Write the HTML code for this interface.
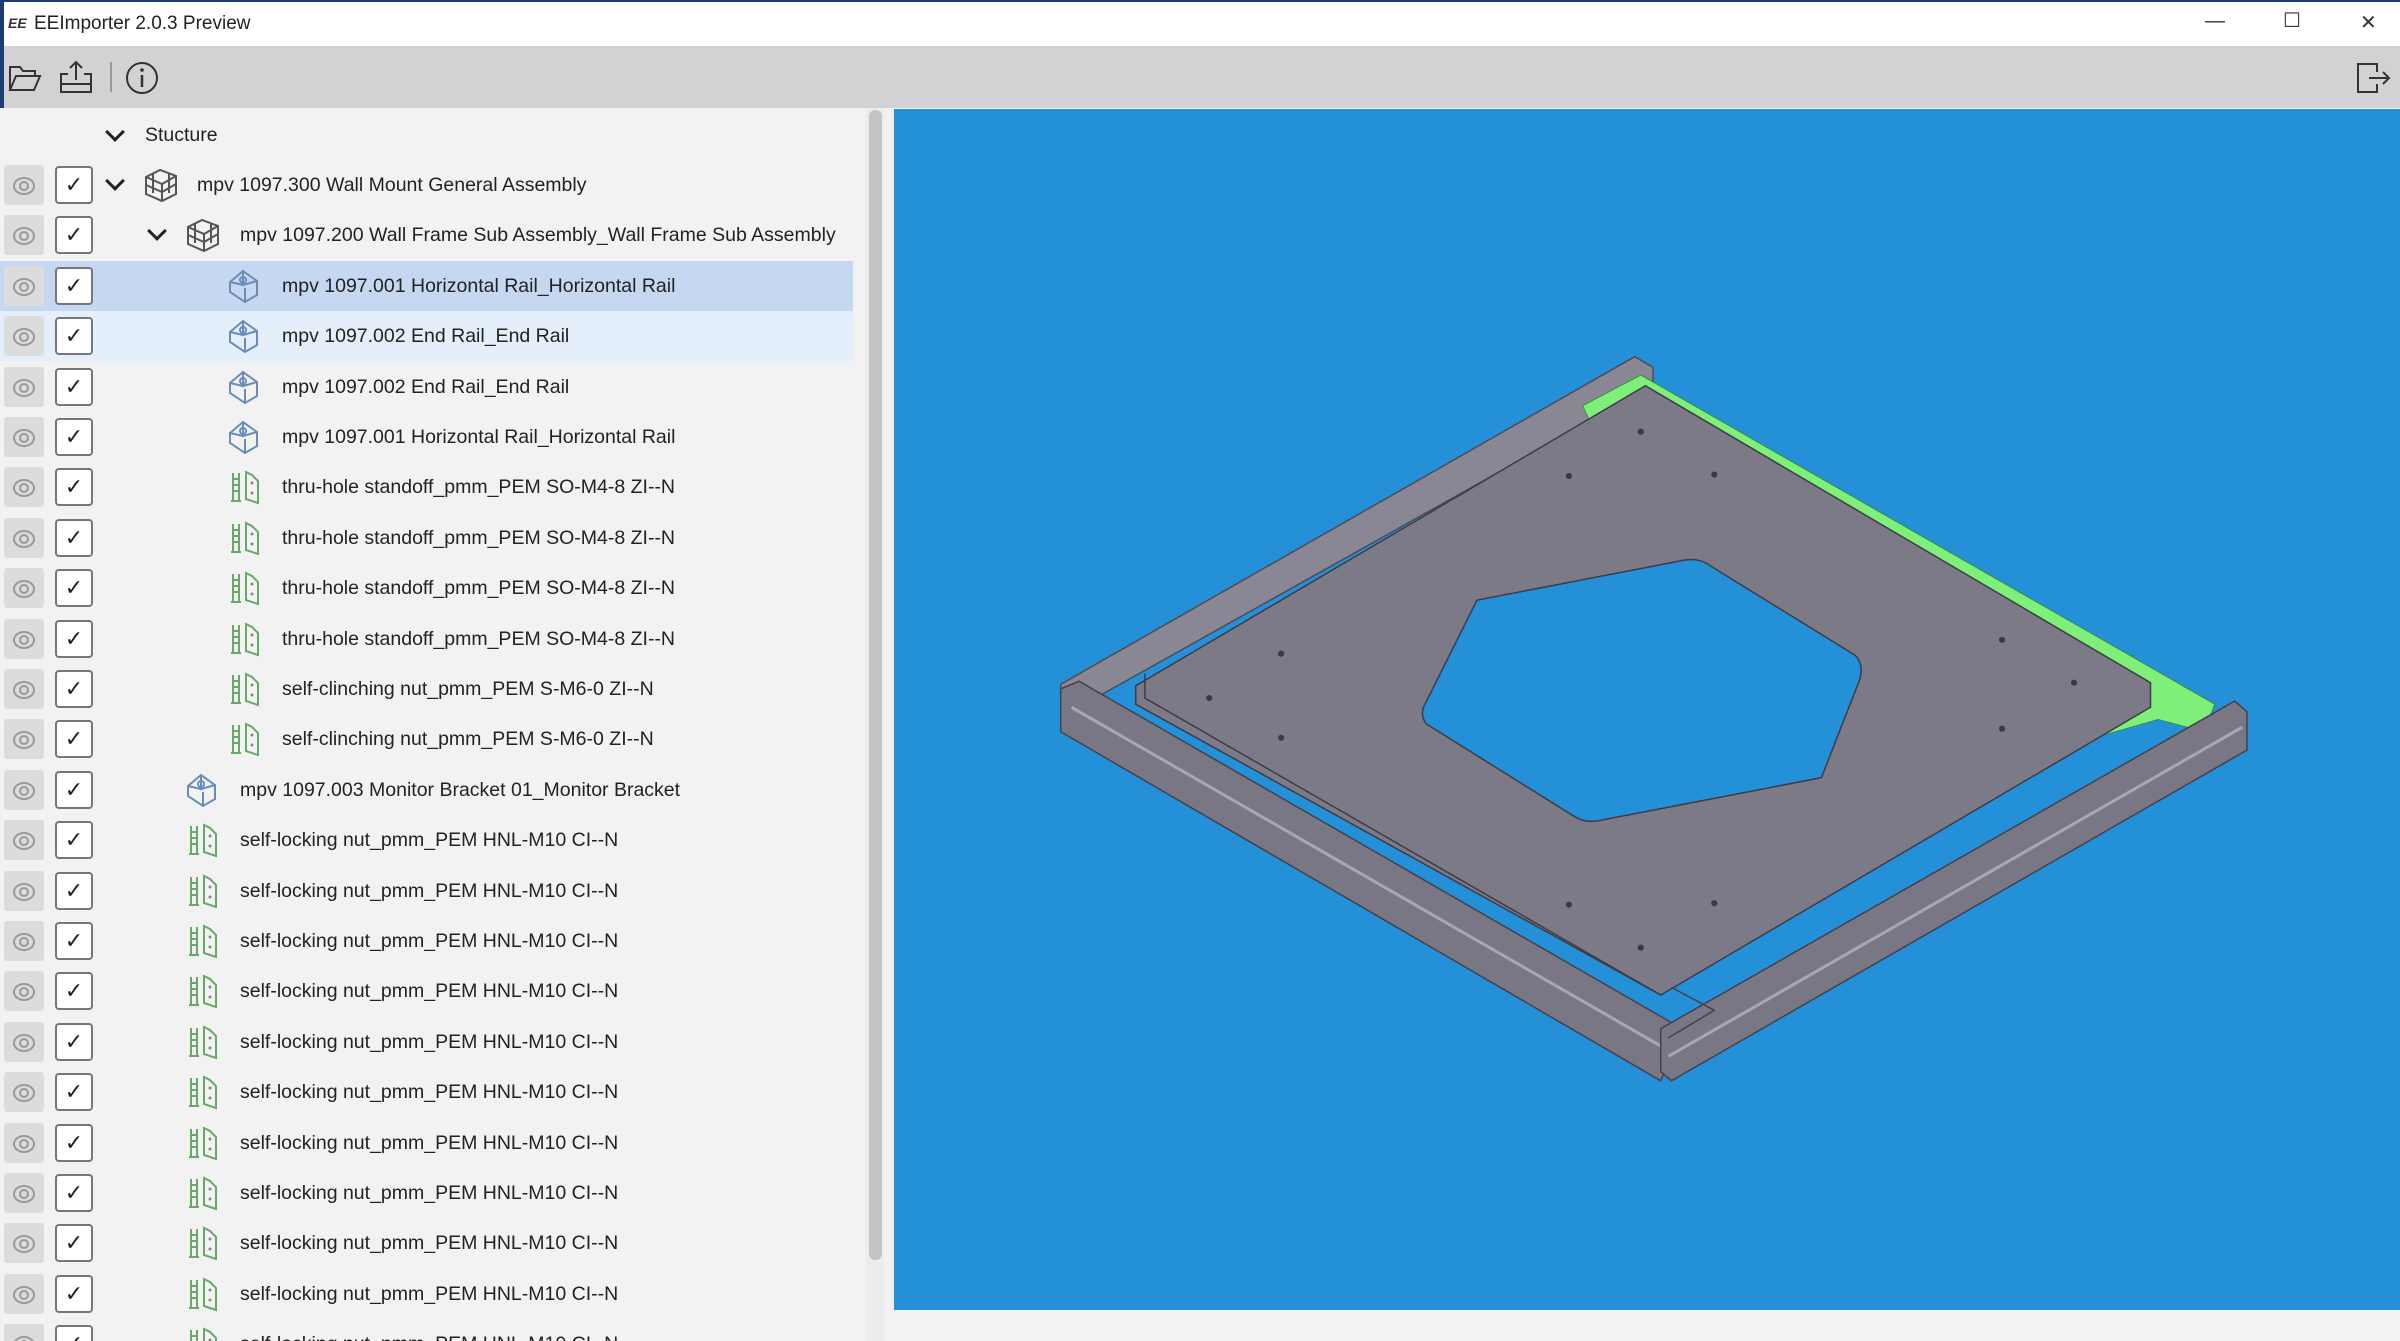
<!DOCTYPE html>
<html><head><meta charset="utf-8"><style>
*{margin:0;padding:0;box-sizing:border-box}
body{width:2400px;height:1341px;overflow:hidden;background:#f2f2f2;font-family:"Liberation Sans",sans-serif;position:relative;color:#222}
.title{position:absolute;left:0;top:0;width:2400px;height:46px;background:#fff;border-top:2px solid #1c3e6e}
.title .t{position:absolute;left:34px;top:11px;font-size:19px;color:#222}
.title .logo{position:absolute;left:8px;top:13px;font-size:14px;font-weight:bold;font-style:italic;color:#333}
.wc{position:absolute;top:8px;font-size:20px;color:#333}
.tb{position:absolute;left:0;top:46px;width:2400px;height:62px;background:#d2d2d4}
.left{position:absolute;left:0;top:108px;width:866px;height:1233px;background:#f2f2f2;overflow:hidden}
.edge{position:absolute;left:0;top:0;width:4px;height:1341px;background:#1c3e6e}
.sb{position:absolute;left:866px;top:108px;width:18px;height:1233px;background:#ececec}
.sb div{position:absolute;left:3px;top:2px;width:13px;height:1150px;background:#c4c4c4;border-radius:6px}
.vp{position:absolute;left:894px;top:109px;width:1506px;height:1201px;background:#2490d8}
.row{position:absolute;left:0;height:50px;width:866px}
.eye{position:absolute;left:4px;top:5px;width:40px;height:40px;background:#dcdcdc;border-radius:3px}
.eye:before{content:"";position:absolute;left:9px;top:12px;width:18px;height:14px;border:2px solid #999;border-radius:50%}
.eye:after{content:"";position:absolute;left:15px;top:16px;width:6px;height:6px;border:2px solid #999;border-radius:50%}
.cb{position:absolute;left:55px;top:6px;width:38px;height:38px;background:#fff;border:2px solid #777;border-radius:4px;text-align:center;font-size:22px;line-height:34px;color:#222}
.chev{position:absolute;top:14px;width:14px;height:14px;border-right:3px solid #222;border-bottom:3px solid #222;transform:rotate(45deg)}
.ic{position:absolute;top:7px;width:38px;height:36px}
.tx{position:absolute;top:14px;font-size:19.5px;white-space:nowrap}
.sel{background:#c6d8f1}
.hov{background:#e5eefb}
</style></head><body>
<div class="title"><span class="logo">EE</span><span class="t">EEImporter 2.0.3 Preview</span>
<span class="wc" style="left:2205px">—</span><span class="wc" style="left:2283px;top:6px">☐</span><span class="wc" style="left:2360px">✕</span></div>
<div class="tb">
<svg style="position:absolute;left:8px;top:18px" width="34" height="28" viewBox="0 0 34 28"><path d="M2 26V3h10l3 4h12v5M2 26l6-14h24l-6 14z" fill="none" stroke="#333" stroke-width="2"/></svg>
<svg style="position:absolute;left:58px;top:14px" width="36" height="34" viewBox="0 0 36 34"><path d="M18 2v18M12 8l6-6 6 6M10 14H3v18h30V14h-7M3 24h30" fill="none" stroke="#333" stroke-width="2"/></svg>
<div style="position:absolute;left:110px;top:16px;width:2px;height:30px;background:#999"></div>
<svg style="position:absolute;left:124px;top:14px" width="36" height="36" viewBox="0 0 36 36"><circle cx="18" cy="18" r="15" fill="none" stroke="#333" stroke-width="2"/><path d="M18 15v12" stroke="#333" stroke-width="2.5"/><circle cx="18" cy="10" r="1.8" fill="#333"/></svg>
<svg style="position:absolute;left:2355px;top:16px" width="36" height="32" viewBox="0 0 36 32"><path d="M22 10V2H3v28h19v-8M14 16h20M28 10l6 6-6 6" fill="none" stroke="#333" stroke-width="2"/></svg>
</div>
<div class="edge"></div>
<div class="left">
<div class="chev" style="left:108px;top:17px"></div><div class="tx" style="left:145px;top:16px">Stucture</div>

<div class="row" style="top:52px"><div class="eye"></div><div class="cb">✓</div><div class="chev" style="left:108px"></div><svg class="ic" style="left:142px" viewBox="0 0 38 36"><path d="M4 10l14-7 16 6v18l-14 7-16-7z M4 10l16 7 14-8M20 17v17M11 6v20M27 6v20M4 18l16 7 14-8" fill="none" stroke="#555" stroke-width="2"/></svg><div class="tx" style="left:197px">mpv 1097.300 Wall Mount General Assembly</div></div>
<div class="row" style="top:102.4px"><div class="eye"></div><div class="cb">✓</div><div class="chev" style="left:150px"></div><svg class="ic" style="left:184px" viewBox="0 0 38 36"><path d="M4 10l14-7 16 6v18l-14 7-16-7z M4 10l16 7 14-8M20 17v17M11 6v20M27 6v20M4 18l16 7 14-8" fill="none" stroke="#555" stroke-width="2"/></svg><div class="tx" style="left:240px">mpv 1097.200 Wall Frame Sub Assembly_Wall Frame Sub Assembly</div></div>

<div class="row sel" style="top:152.8px;width:853px"><div class="eye"></div><div class="cb">✓</div><svg class="ic" style="left:226px" viewBox="0 0 38 36"><path d="M4 14L17 3l14 10v14L19 34 4 24z M17 3v14l14-4M4 14l13 3M19 34V20" fill="none" stroke="#6a8cb8" stroke-width="2"/><circle cx="17" cy="12" r="3" fill="none" stroke="#6a8cb8" stroke-width="2"/></svg><div class="tx" style="left:282px">mpv 1097.001 Horizontal Rail_Horizontal Rail</div></div>
<div class="row hov" style="top:203.2px;width:853px"><div class="eye"></div><div class="cb">✓</div><svg class="ic" style="left:226px" viewBox="0 0 38 36"><path d="M4 14L17 3l14 10v14L19 34 4 24z M17 3v14l14-4M4 14l13 3M19 34V20" fill="none" stroke="#6a8cb8" stroke-width="2"/><circle cx="17" cy="12" r="3" fill="none" stroke="#6a8cb8" stroke-width="2"/></svg><div class="tx" style="left:282px">mpv 1097.002 End Rail_End Rail</div></div>
<div class="row" style="top:253.6px"><div class="eye"></div><div class="cb">✓</div><svg class="ic" style="left:226px" viewBox="0 0 38 36"><path d="M4 14L17 3l14 10v14L19 34 4 24z M17 3v14l14-4M4 14l13 3M19 34V20" fill="none" stroke="#6a8cb8" stroke-width="2"/><circle cx="17" cy="12" r="3" fill="none" stroke="#6a8cb8" stroke-width="2"/></svg><div class="tx" style="left:282px">mpv 1097.002 End Rail_End Rail</div></div>
<div class="row" style="top:304px"><div class="eye"></div><div class="cb">✓</div><svg class="ic" style="left:226px" viewBox="0 0 38 36"><path d="M4 14L17 3l14 10v14L19 34 4 24z M17 3v14l14-4M4 14l13 3M19 34V20" fill="none" stroke="#6a8cb8" stroke-width="2"/><circle cx="17" cy="12" r="3" fill="none" stroke="#6a8cb8" stroke-width="2"/></svg><div class="tx" style="left:282px">mpv 1097.001 Horizontal Rail_Horizontal Rail</div></div>

<div class="row" style="top:354.4px"><div class="eye"></div><div class="cb">✓</div><svg class="ic" style="left:226px" viewBox="0 0 38 36"><path d="M7 4v28M13 4v28M7 10h6M7 16h6M7 22h6M5 32h10M20 3l6 3 6 6v22l-12-4z" fill="none" stroke="#6aa86a" stroke-width="2"/><circle cx="26" cy="14" r="1.5" fill="#888"/><circle cx="26" cy="24" r="1.5" fill="#888"/></svg><div class="tx" style="left:282px">thru-hole standoff_pmm_PEM SO-M4-8 ZI--N</div></div>
<div class="row" style="top:404.8px"><div class="eye"></div><div class="cb">✓</div><svg class="ic" style="left:226px" viewBox="0 0 38 36"><path d="M7 4v28M13 4v28M7 10h6M7 16h6M7 22h6M5 32h10M20 3l6 3 6 6v22l-12-4z" fill="none" stroke="#6aa86a" stroke-width="2"/><circle cx="26" cy="14" r="1.5" fill="#888"/><circle cx="26" cy="24" r="1.5" fill="#888"/></svg><div class="tx" style="left:282px">thru-hole standoff_pmm_PEM SO-M4-8 ZI--N</div></div>
<div class="row" style="top:455.2px"><div class="eye"></div><div class="cb">✓</div><svg class="ic" style="left:226px" viewBox="0 0 38 36"><path d="M7 4v28M13 4v28M7 10h6M7 16h6M7 22h6M5 32h10M20 3l6 3 6 6v22l-12-4z" fill="none" stroke="#6aa86a" stroke-width="2"/><circle cx="26" cy="14" r="1.5" fill="#888"/><circle cx="26" cy="24" r="1.5" fill="#888"/></svg><div class="tx" style="left:282px">thru-hole standoff_pmm_PEM SO-M4-8 ZI--N</div></div>
<div class="row" style="top:505.6px"><div class="eye"></div><div class="cb">✓</div><svg class="ic" style="left:226px" viewBox="0 0 38 36"><path d="M7 4v28M13 4v28M7 10h6M7 16h6M7 22h6M5 32h10M20 3l6 3 6 6v22l-12-4z" fill="none" stroke="#6aa86a" stroke-width="2"/><circle cx="26" cy="14" r="1.5" fill="#888"/><circle cx="26" cy="24" r="1.5" fill="#888"/></svg><div class="tx" style="left:282px">thru-hole standoff_pmm_PEM SO-M4-8 ZI--N</div></div>
<div class="row" style="top:556px"><div class="eye"></div><div class="cb">✓</div><svg class="ic" style="left:226px" viewBox="0 0 38 36"><path d="M7 4v28M13 4v28M7 10h6M7 16h6M7 22h6M5 32h10M20 3l6 3 6 6v22l-12-4z" fill="none" stroke="#6aa86a" stroke-width="2"/><circle cx="26" cy="14" r="1.5" fill="#888"/><circle cx="26" cy="24" r="1.5" fill="#888"/></svg><div class="tx" style="left:282px">self-clinching nut_pmm_PEM S-M6-0 ZI--N</div></div>
<div class="row" style="top:606.4px"><div class="eye"></div><div class="cb">✓</div><svg class="ic" style="left:226px" viewBox="0 0 38 36"><path d="M7 4v28M13 4v28M7 10h6M7 16h6M7 22h6M5 32h10M20 3l6 3 6 6v22l-12-4z" fill="none" stroke="#6aa86a" stroke-width="2"/><circle cx="26" cy="14" r="1.5" fill="#888"/><circle cx="26" cy="24" r="1.5" fill="#888"/></svg><div class="tx" style="left:282px">self-clinching nut_pmm_PEM S-M6-0 ZI--N</div></div>

<div class="row" style="top:656.8px"><div class="eye"></div><div class="cb">✓</div><svg class="ic" style="left:184px" viewBox="0 0 38 36"><path d="M4 14L17 3l14 10v14L19 34 4 24z M17 3v14l14-4M4 14l13 3M19 34V20" fill="none" stroke="#6a8cb8" stroke-width="2"/><circle cx="17" cy="12" r="3" fill="none" stroke="#6a8cb8" stroke-width="2"/></svg><div class="tx" style="left:240px">mpv 1097.003 Monitor Bracket 01_Monitor Bracket</div></div>

<div class="row" style="top:707.2px"><div class="eye"></div><div class="cb">✓</div><svg class="ic" style="left:184px" viewBox="0 0 38 36"><path d="M7 4v28M13 4v28M7 10h6M7 16h6M7 22h6M5 32h10M20 3l6 3 6 6v22l-12-4z" fill="none" stroke="#6aa86a" stroke-width="2"/><circle cx="26" cy="14" r="1.5" fill="#888"/><circle cx="26" cy="24" r="1.5" fill="#888"/></svg><div class="tx" style="left:240px">self-locking nut_pmm_PEM HNL-M10 CI--N</div></div>
<div class="row" style="top:757.6px"><div class="eye"></div><div class="cb">✓</div><svg class="ic" style="left:184px" viewBox="0 0 38 36"><path d="M7 4v28M13 4v28M7 10h6M7 16h6M7 22h6M5 32h10M20 3l6 3 6 6v22l-12-4z" fill="none" stroke="#6aa86a" stroke-width="2"/><circle cx="26" cy="14" r="1.5" fill="#888"/><circle cx="26" cy="24" r="1.5" fill="#888"/></svg><div class="tx" style="left:240px">self-locking nut_pmm_PEM HNL-M10 CI--N</div></div>
<div class="row" style="top:808px"><div class="eye"></div><div class="cb">✓</div><svg class="ic" style="left:184px" viewBox="0 0 38 36"><path d="M7 4v28M13 4v28M7 10h6M7 16h6M7 22h6M5 32h10M20 3l6 3 6 6v22l-12-4z" fill="none" stroke="#6aa86a" stroke-width="2"/><circle cx="26" cy="14" r="1.5" fill="#888"/><circle cx="26" cy="24" r="1.5" fill="#888"/></svg><div class="tx" style="left:240px">self-locking nut_pmm_PEM HNL-M10 CI--N</div></div>
<div class="row" style="top:858.4px"><div class="eye"></div><div class="cb">✓</div><svg class="ic" style="left:184px" viewBox="0 0 38 36"><path d="M7 4v28M13 4v28M7 10h6M7 16h6M7 22h6M5 32h10M20 3l6 3 6 6v22l-12-4z" fill="none" stroke="#6aa86a" stroke-width="2"/><circle cx="26" cy="14" r="1.5" fill="#888"/><circle cx="26" cy="24" r="1.5" fill="#888"/></svg><div class="tx" style="left:240px">self-locking nut_pmm_PEM HNL-M10 CI--N</div></div>
<div class="row" style="top:908.8px"><div class="eye"></div><div class="cb">✓</div><svg class="ic" style="left:184px" viewBox="0 0 38 36"><path d="M7 4v28M13 4v28M7 10h6M7 16h6M7 22h6M5 32h10M20 3l6 3 6 6v22l-12-4z" fill="none" stroke="#6aa86a" stroke-width="2"/><circle cx="26" cy="14" r="1.5" fill="#888"/><circle cx="26" cy="24" r="1.5" fill="#888"/></svg><div class="tx" style="left:240px">self-locking nut_pmm_PEM HNL-M10 CI--N</div></div>
<div class="row" style="top:959.2px"><div class="eye"></div><div class="cb">✓</div><svg class="ic" style="left:184px" viewBox="0 0 38 36"><path d="M7 4v28M13 4v28M7 10h6M7 16h6M7 22h6M5 32h10M20 3l6 3 6 6v22l-12-4z" fill="none" stroke="#6aa86a" stroke-width="2"/><circle cx="26" cy="14" r="1.5" fill="#888"/><circle cx="26" cy="24" r="1.5" fill="#888"/></svg><div class="tx" style="left:240px">self-locking nut_pmm_PEM HNL-M10 CI--N</div></div>
<div class="row" style="top:1009.6px"><div class="eye"></div><div class="cb">✓</div><svg class="ic" style="left:184px" viewBox="0 0 38 36"><path d="M7 4v28M13 4v28M7 10h6M7 16h6M7 22h6M5 32h10M20 3l6 3 6 6v22l-12-4z" fill="none" stroke="#6aa86a" stroke-width="2"/><circle cx="26" cy="14" r="1.5" fill="#888"/><circle cx="26" cy="24" r="1.5" fill="#888"/></svg><div class="tx" style="left:240px">self-locking nut_pmm_PEM HNL-M10 CI--N</div></div>
<div class="row" style="top:1060px"><div class="eye"></div><div class="cb">✓</div><svg class="ic" style="left:184px" viewBox="0 0 38 36"><path d="M7 4v28M13 4v28M7 10h6M7 16h6M7 22h6M5 32h10M20 3l6 3 6 6v22l-12-4z" fill="none" stroke="#6aa86a" stroke-width="2"/><circle cx="26" cy="14" r="1.5" fill="#888"/><circle cx="26" cy="24" r="1.5" fill="#888"/></svg><div class="tx" style="left:240px">self-locking nut_pmm_PEM HNL-M10 CI--N</div></div>
<div class="row" style="top:1110.4px"><div class="eye"></div><div class="cb">✓</div><svg class="ic" style="left:184px" viewBox="0 0 38 36"><path d="M7 4v28M13 4v28M7 10h6M7 16h6M7 22h6M5 32h10M20 3l6 3 6 6v22l-12-4z" fill="none" stroke="#6aa86a" stroke-width="2"/><circle cx="26" cy="14" r="1.5" fill="#888"/><circle cx="26" cy="24" r="1.5" fill="#888"/></svg><div class="tx" style="left:240px">self-locking nut_pmm_PEM HNL-M10 CI--N</div></div>
<div class="row" style="top:1160.8px"><div class="eye"></div><div class="cb">✓</div><svg class="ic" style="left:184px" viewBox="0 0 38 36"><path d="M7 4v28M13 4v28M7 10h6M7 16h6M7 22h6M5 32h10M20 3l6 3 6 6v22l-12-4z" fill="none" stroke="#6aa86a" stroke-width="2"/><circle cx="26" cy="14" r="1.5" fill="#888"/><circle cx="26" cy="24" r="1.5" fill="#888"/></svg><div class="tx" style="left:240px">self-locking nut_pmm_PEM HNL-M10 CI--N</div></div>
<div class="row" style="top:1211.2px"><div class="eye"></div><div class="cb">✓</div><svg class="ic" style="left:184px" viewBox="0 0 38 36"><path d="M7 4v28M13 4v28M7 10h6M7 16h6M7 22h6M5 32h10M20 3l6 3 6 6v22l-12-4z" fill="none" stroke="#6aa86a" stroke-width="2"/><circle cx="26" cy="14" r="1.5" fill="#888"/><circle cx="26" cy="24" r="1.5" fill="#888"/></svg><div class="tx" style="left:240px">self-locking nut_pmm_PEM HNL-M10 CI--N</div></div>
</div>
<div class="sb"><div></div></div>
<div class="vp"></div>
<svg style="position:absolute;left:0;top:0" width="2400" height="1341" viewBox="0 0 1568 876" preserveAspectRatio="none">
<polygon points="693,447 1068,233 1080,240 1080,252 705,462 693,458" fill="#8a8794" stroke="#4e4c58" stroke-width="1"/>
<polygon points="1034,265 1072,245 1447,460 1440,478 1410,470 1375,480 1360,470 1400,452 1080,262 1040,278" fill="#7ef07a" stroke="#3a8a3a" stroke-width="0.6"/>
<path d="M742,448 L1075,252 L1405,446 L1405,462 L1085,650 L742,460 Z M965,392 L1100,366 Q1110,364 1118,370 L1212,428 Q1218,434 1215,444 L1190,508 L1045,536 Q1035,538 1028,533 L932,473 Q928,468 930,462 Z" fill="#7d7a88" fill-rule="evenodd" stroke="#3e3c48" stroke-width="1"/>
<polygon points="693,450 705,445 1092,668 1092,690 1085,706 693,478" fill="#7a7784" stroke="#44424e" stroke-width="1"/>
<polyline points="700,462 1088,685" fill="none" stroke="#a9a6b4" stroke-width="2"/>
<polyline points="748,440 748,456 1085,650" fill="none" stroke="#3e3c48" stroke-width="1"/>
<polygon points="1085,672 1460,458 1468,465 1468,490 1092,706 1085,700" fill="#7a7784" stroke="#44424e" stroke-width="1"/>
<polyline points="1090,690 1465,475" fill="none" stroke="#a9a6b4" stroke-width="2"/>
<polyline points="1092,645 1120,660 1090,678" fill="none" stroke="#44424e" stroke-width="1"/>
<g fill="#3a3844">
<circle cx="1072" cy="282" r="2"/><circle cx="1025" cy="311" r="2"/><circle cx="1120" cy="310" r="2"/><circle cx="837" cy="427" r="2"/><circle cx="790" cy="456" r="2"/><circle cx="837" cy="482" r="2"/><circle cx="1308" cy="418" r="2"/><circle cx="1355" cy="446" r="2"/><circle cx="1308" cy="476" r="2"/><circle cx="1025" cy="591" r="2"/><circle cx="1120" cy="590" r="2"/><circle cx="1072" cy="619" r="2"/>
</g>
</svg>
</body></html>
